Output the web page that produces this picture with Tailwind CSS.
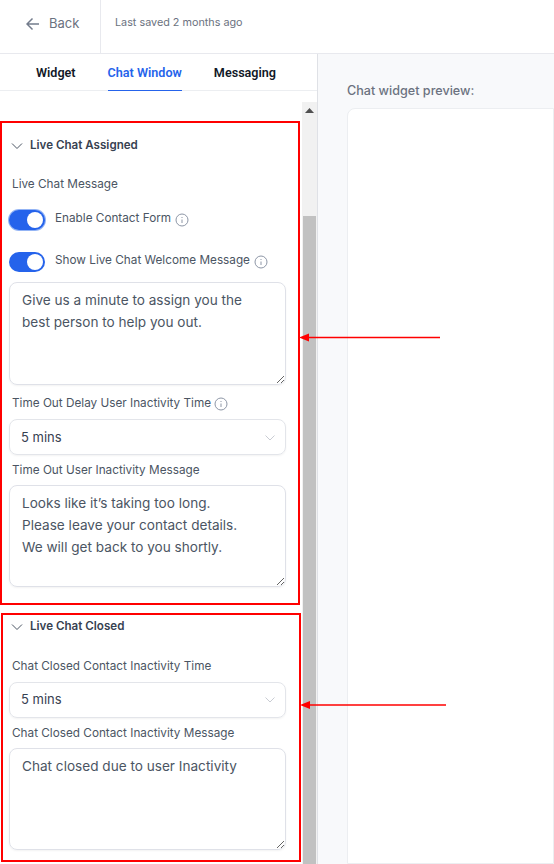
<!DOCTYPE html>
<html lang="en">
<head>
<meta charset="utf-8" />
<title>Chat Window</title>
<script src="https://cdn.jsdelivr.net/npm/@tailwindcss/browser@4"></script>
</head>
<body class="font-['Inter',sans-serif] bg-white">
<div class="relative w-[554px] h-[864px] overflow-hidden flex flex-col">
  <!-- top bar -->
  <div class="h-[54px] shrink-0 flex border-b border-[#e8e9ee]">
    <div class="w-[101px] border-r border-[#e8e9ee] flex items-center pl-[26px] gap-[9px] text-[#6b7280] pb-[6px]">
      <svg width="14" height="14" viewBox="0 0 14 14" fill="none" stroke="#737c8c" stroke-width="1.5"><path d="M13 7H1.500M6.500 1.500 1 7l5.500 5.500"/></svg>
      <span class="text-[13px]">Back</span>
    </div>
    <div class="pl-[14px] flex items-center text-[10.800px] text-[#6b7280] pb-[6px]">Last saved 2 months ago</div>
  </div>
  <div class="flex flex-1 min-h-0">
    <!-- left panel -->
    <div class="w-[318px] shrink-0 border-r border-[#dfe1e6] flex flex-col">
      <div class="h-[37px] shrink-0 border-b border-[#eceef1] flex pl-[36px] font-['Roboto',sans-serif] text-[12.600px] font-semibold text-[#111827]">
        <div class="pt-[10px]">Widget</div>
        <div class="ml-[32px] pt-[10px] h-[37px] text-[#2563eb] border-b border-[#2563eb]">Chat Window</div>
        <div class="ml-[32px] pt-[10px]">Messaging</div>
      </div>
      <div class="flex flex-1 min-h-0 pt-[11px]">
        <div class="w-[302px] shrink-0 overflow-hidden pl-[9px] pr-[16px]">
          <div class="h-[20px] mt-[33px] pt-[1px] flex items-center gap-[7px] ml-[2px] text-[11.600px] font-semibold text-[#374151]">
            <svg width="12" height="8" viewBox="0 0 12 8" fill="none" stroke="#4b5563" stroke-width="1"><path d="M1 1.500 6 6.500l5-5"/></svg>
            <span>Live Chat Assigned</span>
          </div>
          <div class="mt-[19px] ml-[3px] text-[11.750px] leading-[20px] text-[#4b5563]">Live Chat Message</div>
          <div class="mt-[16px] flex items-start gap-[10px] text-[11.750px] text-[#4b5563]">
            <div class="w-[36px] h-[20px] rounded-full bg-[#2563eb] flex justify-end p-[2px] ring-1 ring-[#93b4f5]"><div class="w-[16px] h-[16px] bg-white rounded-full"></div></div>
            <span class="-mt-[2px] leading-[20px]">Enable Contact Form</span>
            <svg class="-ml-[6px] mt-[3px]" width="14" height="14" viewBox="0 0 14 14" fill="none" stroke="#8d96a6"><circle cx="7" cy="7" r="6"/><path d="M7 6.500v3.500M7 4v1"/></svg>
          </div>
          <div class="mt-[22px] flex items-start gap-[10px] text-[11.750px] text-[#4b5563]">
            <div class="w-[36px] h-[20px] rounded-full bg-[#2563eb] flex justify-end p-[2px]"><div class="w-[16px] h-[16px] bg-white rounded-full"></div></div>
            <span class="-mt-[2px] leading-[20px]">Show Live Chat Welcome Message</span>
            <svg class="-ml-[6px] mt-[3px]" width="14" height="14" viewBox="0 0 14 14" fill="none" stroke="#8d96a6"><circle cx="7" cy="7" r="6"/><path d="M7 6.500v3.500M7 4v1"/></svg>
          </div>
          <textarea class="block mt-[10px] w-[277px] h-[103px] border border-[#dfe1e8] rounded-[8px] px-[12px] py-[6px] text-[13.600px] leading-[22px] text-[#4b5563] outline-none shadow-xs">Give us a minute to assign you the best person to help you out.</textarea>
          <div class="mt-[8px] ml-[3px] flex items-center gap-[3px] h-[20px] pt-[1px] text-[11.750px] text-[#4b5563]">
            <span>Time Out Delay User Inactivity Time</span>
            <svg width="14" height="14" viewBox="0 0 14 14" fill="none" stroke="#8d96a6"><circle cx="7" cy="7" r="6"/><path d="M7 6.500v3.500M7 4v1"/></svg>
          </div>
          <div class="mt-[6px] w-[277px] h-[36px] border border-[#e3e5ea] rounded-[8px] flex items-center justify-between pl-[11px] pr-[10px] pt-[1px] text-[13px] text-[#374151] shadow-xs">
            <span>5 mins</span>
            <svg width="10" height="6" viewBox="0 0 10 6" fill="none" stroke="#c9ccd3"><path d="M.5.500 5 5 9.500.5"/></svg>
          </div>
          <div class="mt-[5px] ml-[3px] h-[20px] leading-[20px] text-[11.750px] text-[#4b5563]">Time Out User Inactivity Message</div>
          <textarea class="block mt-[5px] w-[277px] h-[102px] border border-[#dfe1e8] rounded-[8px] px-[12px] py-[6px] text-[13.600px] leading-[22px] text-[#4b5563] outline-none shadow-xs">Looks like it’s taking too long.
Please leave your contact details.
We will get back to you shortly.</textarea>
          <div class="mt-[29px] h-[20px] pt-[1px] flex items-center gap-[7px] ml-[2px] text-[11.600px] font-semibold text-[#374151]">
            <svg width="12" height="8" viewBox="0 0 12 8" fill="none" stroke="#4b5563" stroke-width="1"><path d="M1 1.500 6 6.500l5-5"/></svg>
            <span>Live Chat Closed</span>
          </div>
          <div class="mt-[20px] ml-[3px] h-[20px] leading-[20px] text-[11.750px] text-[#4b5563]">Chat Closed Contact Inactivity Time</div>
          <div class="mt-[6px] w-[277px] h-[36px] border border-[#e3e5ea] rounded-[8px] flex items-center justify-between pl-[11px] pr-[10px] pb-[1px] text-[13px] text-[#374151] shadow-xs">
            <span>5 mins</span>
            <svg width="10" height="6" viewBox="0 0 10 6" fill="none" stroke="#c9ccd3"><path d="M.5.500 5 5 9.500.5"/></svg>
          </div>
          <div class="mt-[5px] ml-[3px] h-[20px] leading-[20px] text-[11.750px] text-[#4b5563]">Chat Closed Contact Inactivity Message</div>
          <textarea class="block mt-[5px] w-[277px] h-[102px] border border-[#dfe1e8] rounded-[8px] px-[12px] py-[6px] text-[13.600px] leading-[22px] text-[#4b5563] outline-none shadow-xs">Chat closed due to user Inactivity</textarea>
        </div>
        <!-- scrollbar -->
        <div class="w-[15px] shrink-0 bg-[#f1f1f1] flex flex-col">
          <div class="h-[114px] flex justify-center pt-[6px]"><svg width="9" height="5" viewBox="0 0 9 5"><path d="M4.500 0 9 5H0z" fill="#505050"/></svg></div>
          <div class="flex-1 bg-[#c1c1c1] mx-[1px]"></div>
        </div>
      </div>
    </div>
    <!-- preview -->
    <div class="flex-1 bg-[#f8f9fb] pl-[29px] pt-[29px] flex flex-col">
      <div class="text-[12.600px] leading-[16px] font-medium text-[#6b7280]">Chat widget preview:</div>
      <div class="mt-[9px] flex-1 bg-white rounded-tl-[8px] border border-[#eceef1]"></div>
    </div>
  </div>
  <!-- annotations drawn over the screenshot -->
  <div class="absolute left-0 top-[121px] w-[300px] h-[484px] border-2 border-[#ff0000]"></div>
  <div class="absolute left-[1px] top-[613px] w-[300px] h-[249px] border-2 border-[#ff0000]"></div>
  <svg class="absolute left-[296px] top-[330px]" width="146" height="14" viewBox="0 0 146 14"><path d="M12 7.500H144" stroke="#f00" stroke-width="1.500"/><path d="M3 7.500 13 3.500v8z" fill="#f00"/></svg>
  <svg class="absolute left-[297px] top-[698px]" width="150" height="14" viewBox="0 0 150 14"><path d="M12 7H149" stroke="#f00" stroke-width="1.500"/><path d="M3 7 13 3v8z" fill="#f00"/></svg>
</div>
</body>
</html>
